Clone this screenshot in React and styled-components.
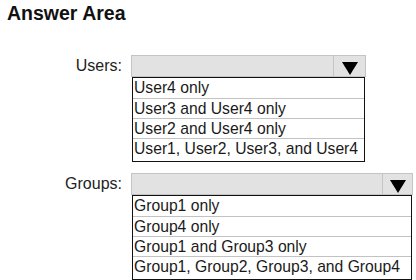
import React from "react";
import styled, { createGlobalStyle } from "styled-components";

const Global = createGlobalStyle`
  html, body { margin: 0; padding: 0; background: #ffffff; }
  body { font-family: "Liberation Sans", Arial, sans-serif; color: #111; }
`;

const Page = styled.div`
  width: 416px;
  height: 280px;
  overflow: hidden;
  padding: 0 0 0 7px;
  box-sizing: border-box;
`;

const Title = styled.h1`
  margin: 0;
  padding-top: 2px;
  font-size: 19.5px;
  line-height: 22px;
  font-weight: bold;
  color: #111;
`;

const Section = styled.div`
  display: flex;
  align-items: flex-start;
  margin-top: ${(p) => p.$top}px;
`;

const Label = styled.div`
  width: 124px;
  text-align: right;
  font-size: 16px;
  line-height: 22px;
  color: #222;
  padding-right: 9px;
  box-sizing: border-box;
`;

const Field = styled.div`
  display: flex;
  flex-direction: column;
`;

const Select = styled.div`
  width: ${(p) => p.$width}px;
  height: 22px;
  box-sizing: border-box;
  border: 1px solid #c4c4c4;
  background: #e2e2e2;
  display: flex;
  justify-content: flex-end;
`;

const Arrow = styled.div`
  width: ${(p) => p.$width}px;
  border-left: 1px solid #c4c4c4;
  display: flex;
  align-items: flex-end;
  justify-content: center;
  padding-bottom: 1px;
  box-sizing: border-box;
`;

const List = styled.div`
  width: ${(p) => p.$width}px;
  margin-left: 1px;
  box-sizing: border-box;
  border: 1px solid #111;
  display: flex;
  flex-direction: column;
`;

const Option = styled.div`
  height: ${(p) => p.$h}px;
  box-sizing: border-box;
  padding-left: 1px;
  font-size: 15.7px;
  line-height: 19px;
  color: #1a1a1a;
  white-space: nowrap;
  border-top: ${(p) => (p.$first ? "none" : "1px solid #c2c2c2")};
`;

const Triangle = () => (
  <svg width="16" height="13" viewBox="0 0 16 13">
    <polygon points="0,0 16,0 8,13" fill="#000" />
  </svg>
);

const Dropdown = ({ label, top, selectWidth, arrowWidth, listWidth, rowH, options }) => (
  <Section $top={top}>
    <Label>{label}</Label>
    <Field>
      <Select $width={selectWidth}>
        <Arrow $width={arrowWidth}>
          <Triangle />
        </Arrow>
      </Select>
      <List $width={listWidth}>
        {options.map((o, i) => (
          <Option
            key={o}
            $first={i === 0}
            $h={i === options.length - 1 ? rowH + 3 : rowH}
          >
            {o}
          </Option>
        ))}
      </List>
    </Field>
  </Section>
);

export default function App() {
  return (
    <>
      <Global />
      <Page>
        <Title>Answer Area</Title>
        <Dropdown
          label="Users:"
          top={31}
          selectWidth={235}
          arrowWidth={32}
          listWidth={233}
          rowH={20}
          options={[
            "User4 only",
            "User3 and User4 only",
            "User2 and User4 only",
            "User1, User2, User3, and User4",
          ]}
        />
        <Dropdown
          label="Groups:"
          top={11}
          selectWidth={282}
          arrowWidth={30}
          listWidth={280}
          rowH={20}
          options={[
            "Group1 only",
            "Group4 only",
            "Group1 and Group3 only",
            "Group1, Group2, Group3, and Group4",
          ]}
        />
      </Page>
    </>
  );
}
